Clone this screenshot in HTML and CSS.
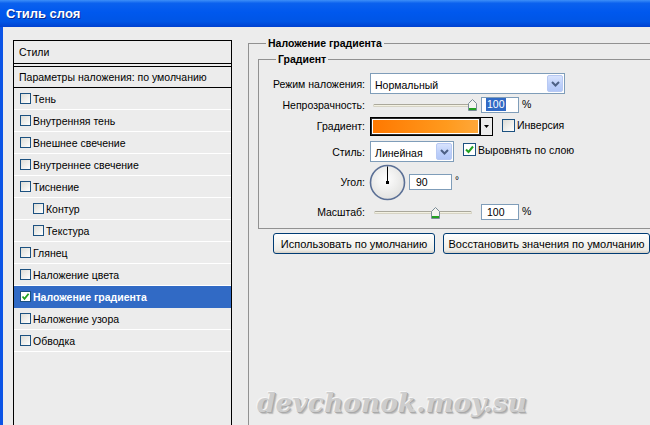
FILE: index.html
```html
<!DOCTYPE html>
<html lang="ru">
<head>
<meta charset="utf-8">
<title>Стиль слоя</title>
<link rel="stylesheet" href="styles.css">
</head>
<body>
<div class="titlebar"><span>Стиль слоя</span></div>
<div class="frame">
  <div class="client">
    <div class="styles-panel">
      <div class="panel-head">Стили</div>
      <div class="panel-sep"></div>
      <div class="panel-blend">Параметры наложения: по умолчанию</div>
      <div class="item"><span class="cb"></span><span class="txt">Тень</span></div>
      <div class="item"><span class="cb"></span><span class="txt">Внутренняя тень</span></div>
      <div class="item"><span class="cb"></span><span class="txt">Внешнее свечение</span></div>
      <div class="item"><span class="cb"></span><span class="txt">Внутреннее свечение</span></div>
      <div class="item"><span class="cb"></span><span class="txt">Тиснение</span></div>
      <div class="item sub"><span class="cb"></span><span class="txt">Контур</span></div>
      <div class="item sub"><span class="cb"></span><span class="txt">Текстура</span></div>
      <div class="item"><span class="cb"></span><span class="txt">Глянец</span></div>
      <div class="item"><span class="cb"></span><span class="txt">Наложение цвета</span></div>
      <div class="item selected"><span class="cb checked"><svg width="9" height="9" viewBox="0 0 9 9"><path d="M1.5 4.5 L3.5 6.8 L7.6 1.8" fill="none" stroke="#21a121" stroke-width="1.8"/></svg></span><span class="txt">Наложение градиента</span></div>
      <div class="item"><span class="cb"></span><span class="txt">Наложение узора</span></div>
      <div class="item"><span class="cb"></span><span class="txt">Обводка</span></div>
    </div>

    <div class="settings">
      <div class="group outer">
        <div class="group-title">Наложение градиента</div>
        <div class="group inner">
          <div class="group-title">Градиент</div>

          <div class="row r1">
            <div class="lbl">Режим наложения:</div>
            <div class="combo combo-mode">
              <span class="combo-text">Нормальный</span>
              <span class="dd-btn"><svg width="9" height="6" viewBox="0 0 9 6"><path d="M1 1 L4.5 4.5 L8 1" fill="none" stroke="#4d6185" stroke-width="2"/></svg></span>
            </div>
          </div>

          <div class="row r2">
            <div class="lbl">Непрозрачность:</div>
            <div class="slider">
              <div class="track"></div>
              <svg class="thumb" style="left:98px" width="9" height="12" viewBox="0 0 9 12"><path d="M0.5 4.5 L4.5 0.5 L8.5 4.5 L8.5 11.5 L0.5 11.5 Z" fill="#f4f4f0" stroke="#7b8c98"/><rect x="1" y="9" width="7" height="2" fill="#21a121"/></svg>
            </div>
            <div class="num"><span class="sel">100</span></div>
            <span class="unit">%</span>
          </div>

          <div class="row r3">
            <div class="lbl">Градиент:</div>
            <div class="swatch">
              <div class="swatch-fill"></div>
              <div class="swatch-btn"><svg width="5" height="3" viewBox="0 0 5 3"><path d="M0 0 H5 L2.5 3 Z" fill="#000"/></svg></div>
            </div>
            <span class="xcb"></span>
            <span class="cb-label">Инверсия</span>
          </div>

          <div class="row r4">
            <div class="lbl">Стиль:</div>
            <div class="combo combo-style">
              <span class="combo-text">Линейная</span>
              <span class="dd-btn"><svg width="9" height="6" viewBox="0 0 9 6"><path d="M1 1 L4.5 4.5 L8 1" fill="none" stroke="#4d6185" stroke-width="2"/></svg></span>
            </div>
            <span class="xcb"><svg width="11" height="11" viewBox="0 0 11 11"><path d="M2 5.5 L4.5 8 L9 2.5" fill="none" stroke="#21a121" stroke-width="2"/></svg></span>
            <span class="cb-label">Выровнять по слою</span>
          </div>

          <div class="row r5">
            <div class="lbl">Угол:</div>
            <div class="dial">
              <svg width="37" height="37" viewBox="0 0 37 37">
                <defs>
                  <radialGradient id="dg" cx="45%" cy="40%" r="60%">
                    <stop offset="0" stop-color="#ffffff"/>
                    <stop offset="1" stop-color="#e2e2e0"/>
                  </radialGradient>
                </defs>
                <circle cx="18.5" cy="18.5" r="17" fill="url(#dg)" stroke="#5a6f95" stroke-width="1.6"/>
                <line x1="18.5" y1="2.5" x2="18.5" y2="18.5" stroke="#000" stroke-width="1"/>
                <rect x="17" y="17" width="3" height="3" fill="#000"/>
              </svg>
            </div>
            <div class="num num-angle">90</div>
            <span class="deg">°</span>
          </div>

          <div class="row r6">
            <div class="lbl">Масштаб:</div>
            <div class="slider slider-scale">
              <div class="track"></div>
              <svg class="thumb" style="left:61px" width="9" height="12" viewBox="0 0 9 12"><path d="M0.5 4.5 L4.5 0.5 L8.5 4.5 L8.5 11.5 L0.5 11.5 Z" fill="#f4f4f0" stroke="#7b8c98"/><rect x="1" y="9" width="7" height="2" fill="#21a121"/></svg>
            </div>
            <div class="num">100</div>
            <span class="unit">%</span>
          </div>
        </div>

        <div class="buttons">
          <div class="btn btn-1">Использовать по умолчанию</div>
          <div class="btn btn-2">Восстановить значения по умолчанию</div>
        </div>
      </div>
    </div>
  </div>
</div>
<div class="watermark">devchonok.moy.su</div>
</body>
</html>
```
FILE: styles.css
```css
* { box-sizing: border-box; }
html, body { margin: 0; padding: 0; }
body {
  width: 650px;
  height: 425px;
  overflow: hidden;
  background: #ececec;
  font-family: "Liberation Sans", Arial, sans-serif;
  font-size: 10.5px;
  color: #000;
  position: relative;
}

/* title bar */
.titlebar {
  height: 27px;
  background: linear-gradient(to bottom, #3d8ff8 0%, #0b61ee 12%, #0058ee 45%, #0055e5 80%, #0041d0 100%);
  display: flex;
  align-items: center;
  padding-left: 6px;
  color: #fff;
  font-weight: bold;
  font-size: 13px;
  text-shadow: 1px 1px 0 #0b2a8f;
}

.frame {
  display: flex;
  height: 398px;
  overflow: hidden;
  border-left: 3px solid #0b54e6;
}
.client {
  display: flex;
  align-items: flex-start;
  padding: 13px 0 0 10px;
  width: 100%;
}

/* left styles list */
.styles-panel {
  flex: none;
  width: 219px;
  height: 386px;
  border: 1px solid #000;
}
.panel-head {
  height: 23px;
  border-bottom: 1px solid #000;
  display: flex;
  align-items: center;
  padding-left: 5px;
}
.panel-sep {
  height: 3px;
  border-bottom: 1px solid #000;
}
.panel-blend {
  height: 21px;
  border-bottom: 1px solid #000;
  display: flex;
  align-items: center;
  padding-left: 5px;
}
.item {
  height: 22px;
  border-bottom: 1px solid #fff;
  display: flex;
  align-items: center;
  padding-left: 6px;
}
.item.sub { padding-left: 19px; }
.item .txt { margin-left: 2px; }
.item.selected {
  background: #316ac5;
  border-bottom-color: #316ac5;
  color: #fff;
  font-weight: bold;
}
.cb {
  flex: none;
  width: 11px;
  height: 11px;
  border: 1px solid #1c5180;
  background: linear-gradient(135deg, #dcdcd6, #ffffff);
  display: flex;
  align-items: center;
  justify-content: center;
}
.cb.checked { background: #fff; }

/* right settings */
.settings {
  flex: 1;
  margin-left: 16px;
  padding-top: 3px;
}
.group {
  border-top: 1px solid #919191;
  border-left: 1px solid #919191;
}
.outer { height: 382px; }
.inner {
  margin: 9px 0 0 9px;
  border-bottom: 1px solid #919191;
  padding-bottom: 7px;
}
.group-title {
  width: max-content;
  margin: -7px 0 0 17px;
  padding: 0 2px;
  background: #ececec;
  font-weight: bold;
  line-height: 13px;
}

.row {
  display: flex;
  align-items: center;
}
.lbl {
  flex: none;
  width: 106px;
  margin-right: 5px;
  text-align: right;
}
.r1 { margin-top: 7px; height: 21px; }
.r2 { height: 21px; }
.r3 { margin-top: 1px; height: 20px; }
.r4 { margin-top: 5px; height: 21px; }
.r5 { margin-top: 3px; height: 34px; }
.r6 { margin-top: 4px; height: 18px; }

.combo {
  height: 21px;
  border: 1px solid #7f9db9;
  background: #fff;
  display: flex;
  align-items: center;
  padding: 1px;
}
.combo-mode { width: 195px; }
.combo-style { width: 84px; }
.combo-text { flex: 1; padding-left: 3px; padding-top: 2px; }
.dd-btn {
  flex: none;
  width: 16px;
  height: 17px;
  border: 1px solid #b8c9f3;
  border-radius: 2px;
  background: linear-gradient(to bottom, #d8e3fd, #bccffa 60%, #b2c7f7);
  display: flex;
  align-items: center;
  justify-content: center;
}

.slider {
  position: relative;
  width: 108px;
  height: 21px;
  margin-right: 3px;
  display: flex;
  align-items: center;
}
.track {
  margin-left: 3px;
  margin-top: 2px;
  width: 97px;
  height: 3px;
  background: #f3f1e2;
  border: 1px solid #d6d3c4;
  border-top-color: #aaa89c;
  border-radius: 2px;
}
.slider-scale { height: 18px; }
.slider-scale .track { margin-left: 4px; width: 98px; margin-top: 1px; }
.thumb {
  position: absolute;
  top: 5px;
}
.slider-scale .thumb { top: 4px; }

.num {
  width: 38px;
  height: 16px;
  border: 1px solid #7f9db9;
  background: #fff;
  padding-left: 5px;
  display: flex;
  align-items: center;
}
.sel { background: #316ac5; color: #fff; padding: 0 1px; margin-left: -1px; line-height: 13px; }
.unit { margin-left: 3px; margin-top: -2px; }

.swatch {
  display: flex;
  width: 123px;
  height: 19px;
  border: 1px solid #000;
}
.swatch-fill {
  flex: 1;
  border: 1px solid #2a2a2a;
  outline: 1px solid #fff;
  outline-offset: -2px;
  background: linear-gradient(to right, #ff7800, #ff9a1e 70%, #ffa83a);
}
.swatch-btn {
  flex: none;
  width: 12px;
  border-left: 1px solid #000;
  background: #ececec;
  display: flex;
  align-items: center;
  justify-content: center;
}

.xcb {
  flex: none;
  width: 13px;
  height: 13px;
  margin-left: 9px;
  border: 1px solid #1c5180;
  background: linear-gradient(135deg, #dcdcd6, #ffffff);
  display: flex;
  align-items: center;
  justify-content: center;
}
.r4 .xcb { background: #fff; margin-top: -4px; }
.r3 .xcb { margin-top: -2px; }
.cb-label { margin-left: 2px; margin-top: -3px; }

.dial {
  flex: none;
  width: 37px;
  height: 37px;
  margin-left: -1px;
  margin-top: 1px;
}
.num-angle {
  width: 43px;
  margin-left: 3px;
  margin-top: 0;
  padding-left: 6px;
}
.deg { margin-left: 3px; align-self: flex-start; margin-top: 10px; font-size: 10px; }

.buttons {
  display: flex;
  gap: 8px;
  margin: 4px 0 0 24px;
}
.btn {
  height: 21px;
  border: 1px solid #003c74;
  border-radius: 3px;
  background: linear-gradient(to bottom, #ffffff 0%, #f4f4f0 50%, #ecebe6 85%, #d6d0c5 100%);
  display: flex;
  align-items: center;
  justify-content: center;
  font-size: 11px;
}
.btn-1 { width: 162px; }
.btn-2 { width: 207px; }

.watermark {
  position: absolute;
  left: 257px;
  top: 387px;
  font-family: "DejaVu Serif", serif;
  font-style: italic;
  font-weight: bold;
  font-size: 26.5px;
  color: #cdcdcd;
  text-shadow: -1px -1px 0 #f6f6f6, 1px 1px 0 #a9a9a9, 2px 2px 1px #bdbdbd;
}
```
